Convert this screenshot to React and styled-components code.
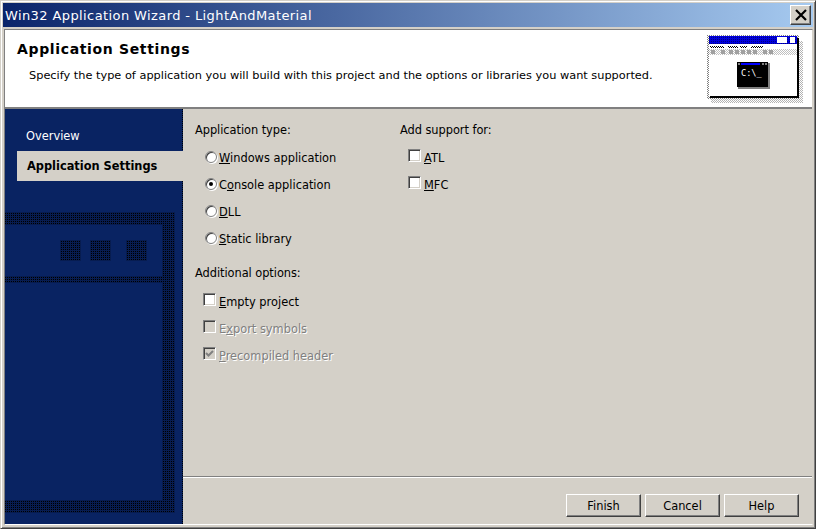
import styled, { createGlobalStyle } from "styled-components";

const Global = createGlobalStyle`
  html, body { margin: 0; padding: 0; background: #d4d0c8; }
  * { box-sizing: border-box; }
`;

const Frame = styled.div`
  width: 816px;
  height: 529px;
  padding: 2px 2px 3px 2px;
  background: #d4d0c8;
  border-top: 1px solid #d4d0c8;
  border-left: 1px solid #d4d0c8;
  border-right: 1px solid #404040;
  border-bottom: 1px solid #404040;
  box-shadow: inset 1px 1px 0 #fff, inset -1px -1px 0 #808080;
  display: flex;
  flex-direction: column;
  font-family: "DejaVu Sans", Verdana, sans-serif;
  font-size: 11.4px;
  color: #000;
`;

const TitleBar = styled.div`
  height: 24px;
  flex: none;
  display: flex;
  align-items: center;
  justify-content: space-between;
  padding: 0 2px 0 2px;
  background: linear-gradient(90deg, #0a246a, #a6caf0);
  color: #fff;
  font-size: 13px;
  letter-spacing: 0.4px;
`;

const CloseButton = styled.div`
  width: 21px;
  height: 20px;
  background: #d4d0c8;
  border-top: 1px solid #fff;
  border-left: 1px solid #fff;
  border-right: 1px solid #404040;
  border-bottom: 1px solid #404040;
  box-shadow: inset -1px -1px 0 #808080;
  display: flex;
  align-items: center;
  justify-content: center;
`;

const Body = styled.div`
  flex: 1;
  margin: 2px 0 0 1px;
  display: flex;
  flex-direction: column;
  border-top: 1px solid #808080;
  border-left: 1px solid #808080;
  border-right: 1px solid #d4d0c8;
  border-bottom: 1px solid #fff;
  min-height: 0;
`;

const Header = styled.div`
  height: 79px;
  flex: none;
  background: #fff;
  border-bottom: 2px solid #808080;
  display: flex;
  justify-content: space-between;
  padding: 10px 9px 0 12px;
`;

const HeaderTitle = styled.div`
  font-weight: bold;
  font-size: 14px;
  letter-spacing: 0.65px;
  line-height: 18px;
`;

const HeaderText = styled.div`
  margin: 10px 0 0 12px;
  font-size: 11.34px;
  line-height: 14px;
`;

const Main = styled.div`
  flex: 1;
  display: flex;
  min-height: 0;
`;

const Sidebar = styled.div`
  position: relative;
  width: 178px;
  flex: none;
  background: #092362;
  padding-top: 12px;
  border-right: 1px dotted #000;
`;

const NavItem = styled.div`
  position: relative;
  height: 30px;
  display: flex;
  align-items: center;
  margin-left: ${(p) => (p.$active ? "12px" : "0")};
  margin-right: ${(p) => (p.$active ? "-1px" : "0")};
  padding-left: ${(p) => (p.$active ? "10px" : "21px")};
  background: ${(p) => (p.$active ? "#d4d0c8" : "transparent")};
  color: ${(p) => (p.$active ? "#000" : "#fff")};
  font-weight: ${(p) => (p.$active ? "bold" : "normal")};
`;

const SideArt = styled.svg`
  position: absolute;
  left: 0;
  top: 0;
`;

const Content = styled.div`
  flex: 1;
  display: flex;
  flex-direction: column;
  min-width: 0;
`;

const Columns = styled.div`
  flex: 1;
  display: flex;
  padding: 14px 0 0 12px;
`;

const Column = styled.div`
  width: ${(p) => p.$width}px;
`;

const GroupLabel = styled.div`
  height: 14px;
  line-height: 14px;
  letter-spacing: -0.05px;
  margin-top: ${(p) => p.$top || 0}px;
  margin-bottom: ${(p) => p.$bottom || 7}px;
`;

const Option = styled.div`
  height: 27px;
  display: flex;
  align-items: center;
  gap: 3px;
  padding-left: 8px;
  color: ${(p) => (p.$disabled ? "#808080" : "#000")};
  text-shadow: ${(p) => (p.$disabled ? "1px 1px 0 #fff" : "none")};
`;

const Radio = styled.span`
  width: 12px;
  height: 12px;
  flex: none;
  margin: -2px -1px 0 2px;
  border-radius: 50%;
  background: #fff;
  border: 1px solid #808080;
  box-shadow: inset 1px 1px 0 #404040, 1px 1px 0 #fff;
  display: flex;
  align-items: center;
  justify-content: center;
  &::after {
    content: "";
    width: 4px;
    height: 4px;
    border-radius: 50%;
    background: ${(p) => (p.$checked ? "#000" : "transparent")};
  }
`;

const CheckBox = styled.span`
  width: 13px;
  height: 13px;
  flex: none;
  margin-top: -4px;
  background: ${(p) => (p.$disabled ? "#d4d0c8" : "#fff")};
  border-top: 1px solid #808080;
  border-left: 1px solid #808080;
  border-right: 1px solid #fff;
  border-bottom: 1px solid #fff;
  box-shadow: inset 1px 1px 0 #404040, inset -1px -1px 0 #d4d0c8;
  display: flex;
  align-items: center;
  justify-content: center;
`;

const Key = styled.span`
  text-decoration: underline;
  text-underline-offset: 1px;
`;

const Footer = styled.div`
  flex: none;
  height: 48px;
  border-top: 1px solid #808080;
  box-shadow: inset 0 1px 0 #fff;
  display: flex;
  justify-content: flex-end;
  align-items: flex-start;
  gap: 4px;
  padding: 17px 13px 0 0;
`;

const Button = styled.div`
  width: 75px;
  height: 23px;
  background: #d4d0c8;
  border-top: 1px solid #fff;
  border-left: 1px solid #fff;
  border-right: 1px solid #404040;
  border-bottom: 1px solid #404040;
  box-shadow: inset -1px -1px 0 #808080;
  display: flex;
  align-items: center;
  justify-content: center;
`;

const DotRect = ({ x, y, w, h }) => (
  <>
    <rect x={x} y={y} width={w} height={h} fill="#071c50" />
    <rect x={x} y={y} width={w} height={h} fill="url(#dots)" />
  </>
);

const toolButtons = [4, 14, 22, 28, 34, 40, 46, 56, 62];

function WizardIcon() {
  return (
    <svg width="96" height="70" viewBox="0 0 96 70" style={{ flex: "none", marginTop: -5 }} shapeRendering="crispEdges">
      <defs>
        <pattern id="chk" width="2" height="2" patternUnits="userSpaceOnUse">
          <rect width="1" height="1" fill="#808080" />
          <rect x="1" y="1" width="1" height="1" fill="#808080" />
        </pattern>
        <pattern id="blue" width="2" height="2" patternUnits="userSpaceOnUse">
          <rect width="2" height="2" fill="#0000e0" />
          <rect width="1" height="1" fill="#000080" />
        </pattern>
        <pattern id="menu" width="2" height="2" patternUnits="userSpaceOnUse">
          <rect width="1" height="1" fill="#000" />
          <rect x="1" y="1" width="1" height="1" fill="#000" />
        </pattern>
      </defs>
      <rect x="4" y="6" width="92" height="62" fill="url(#chk)" opacity="0.6" />
      <rect x="0" y="0" width="92" height="64" fill="url(#chk)" />
      <rect x="2" y="1" width="88" height="60" fill="#fff" />
      <rect x="90" y="3" width="2" height="60" fill="#000" />
      <rect x="3" y="61" width="89" height="2" fill="#000" />
      <rect x="2" y="1" width="88" height="8" fill="url(#blue)" />
      <rect x="70" y="2" width="10" height="6" fill="#fff" />
      <rect x="83" y="2" width="5" height="6" fill="#fff" />
      <rect x="3" y="11" width="14" height="2" fill="url(#menu)" />
      <rect x="21" y="11" width="10" height="2" fill="url(#menu)" />
      <rect x="33" y="11" width="7" height="2" fill="url(#menu)" />
      <rect x="44" y="11" width="12" height="2" fill="url(#menu)" />
      <rect x="2" y="14" width="88" height="6" fill="url(#chk)" opacity="0.5" />
      {toolButtons.map((x) => (
        <rect key={x} x={x} y="15" width="4" height="4" fill="#a0a0a0" />
      ))}
      <rect x="30" y="27" width="31" height="25" fill="#000" />
      <rect x="61" y="28" width="2" height="26" fill="#808080" />
      <rect x="31" y="52" width="32" height="2" fill="#808080" />
      <rect x="31" y="28" width="2" height="2" fill="#808080" />
      <rect x="34" y="28" width="19" height="2" fill="#0000ff" />
      <rect x="55" y="28" width="2" height="2" fill="#808080" />
      <rect x="58" y="28" width="2" height="2" fill="#808080" />
      <text x="34" y="41" fill="#fff" fontSize="8.6" fontFamily="'DejaVu Sans Mono', monospace">C:\_</text>
    </svg>
  );
}

function App() {
  return (
    <>
      <Global />
      <Frame>
        <TitleBar>
          <span>Win32 Application Wizard - LightAndMaterial</span>
          <CloseButton>
            <svg width="12" height="12" viewBox="0 0 12 12">
              <path d="M1 1 L11 11 M11 1 L1 11" stroke="#000" strokeWidth="2.2" />
            </svg>
          </CloseButton>
        </TitleBar>
        <Body>
          <Header>
            <div>
              <HeaderTitle>Application Settings</HeaderTitle>
              <HeaderText>Specify the type of application you will build with this project and the options or libraries you want supported.</HeaderText>
            </div>
            <WizardIcon />
          </Header>
          <Main>
            <Sidebar>
              <SideArt width="177" height="415" shapeRendering="crispEdges">
                <defs>
                  <pattern id="dots" width="2" height="2" patternUnits="userSpaceOnUse">
                    <rect width="1" height="1" fill="#000" />
                  </pattern>
                </defs>
                <DotRect x={0} y={103} w={170} h={13} />
                <DotRect x={157} y={116} w={13} h={288} />
                <DotRect x={0} y={391} w={157} h={13} />
                <DotRect x={0} y={167} w={157} h={7} />
                <DotRect x={55} y={131} w={21} h={21} />
                <DotRect x={85} y={131} w={21} h={21} />
                <DotRect x={121} y={131} w={21} h={21} />
              </SideArt>
              <NavItem>Overview</NavItem>
              <NavItem $active>Application Settings</NavItem>
            </Sidebar>
            <Content>
              <Columns>
                <Column $width={205}>
                  <GroupLabel>Application type:</GroupLabel>
                  <Option><Radio /><span><Key>W</Key>indows application</span></Option>
                  <Option><Radio $checked /><span>C<Key>o</Key>nsole application</span></Option>
                  <Option><Radio /><span><Key>D</Key>LL</span></Option>
                  <Option><Radio /><span><Key>S</Key>tatic library</span></Option>
                  <GroupLabel $top={14} $bottom={8}>Additional options:</GroupLabel>
                  <Option><CheckBox /><span><Key>E</Key>mpty project</span></Option>
                  <Option $disabled><CheckBox $disabled /><span>E<Key>x</Key>port symbols</span></Option>
                  <Option $disabled>
                    <CheckBox $disabled>
                      <svg width="9" height="9" viewBox="0 0 9 9"><path d="M1 4 L3.5 6.5 L8 2" stroke="#808080" strokeWidth="2" fill="none" /></svg>
                    </CheckBox>
                    <span><Key>P</Key>recompiled header</span>
                  </Option>
                </Column>
                <Column $width={200}>
                  <GroupLabel>Add support for:</GroupLabel>
                  <Option><CheckBox /><span><Key>A</Key>TL</span></Option>
                  <Option><CheckBox /><span><Key>M</Key>FC</span></Option>
                </Column>
              </Columns>
              <Footer>
                <Button>Finish</Button>
                <Button>Cancel</Button>
                <Button>Help</Button>
              </Footer>
            </Content>
          </Main>
        </Body>
      </Frame>
    </>
  );
}

export default App;
